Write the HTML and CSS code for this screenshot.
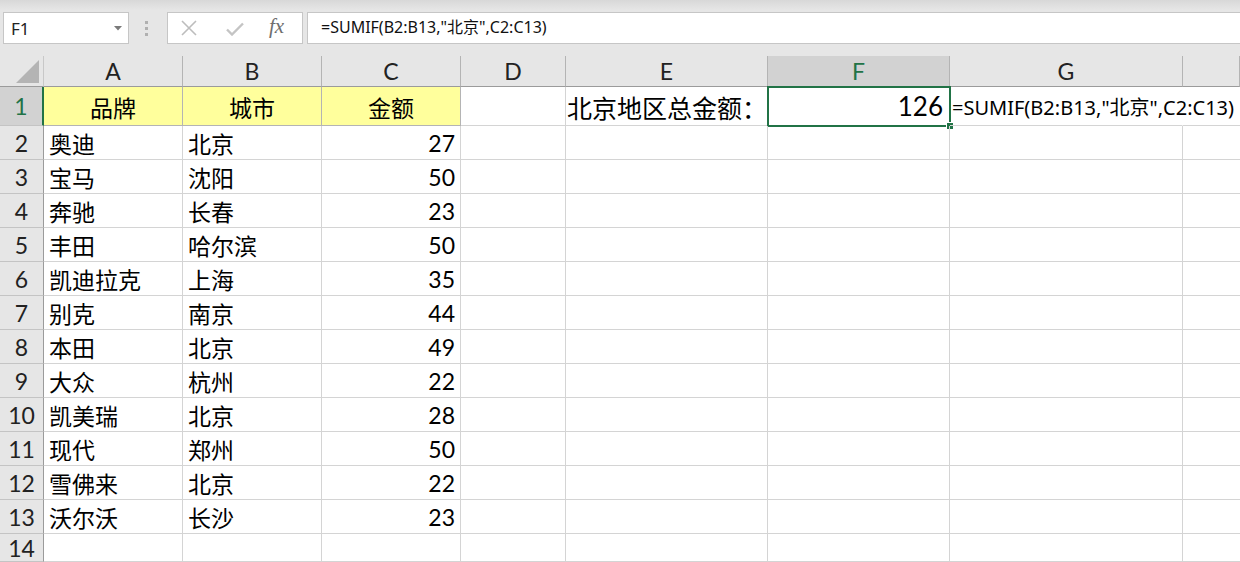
FILE: index.html
```html
<!DOCTYPE html>
<html lang="zh-CN">
<head>
  <meta charset="UTF-8" />
  <meta name="viewport" content="width=device-width, initial-scale=1.0" />
  <title>SUMIF</title>
  <link rel="stylesheet" href="styles.css">
</head>
<body>
  <div class="toolbar">
    <div class="namebox">
      <span>F1</span>
      <svg width="8" height="5" viewBox="0 0 8 5"><path d="M0 0h8L4 4.5z" fill="#7a7a7a"/></svg>
    </div>
    <svg class="grip" width="4" height="15" viewBox="0 0 4 15">
      <rect x="0" y="0" width="3" height="3" fill="#b0b0b0"/>
      <rect x="0" y="6" width="3" height="3" fill="#b0b0b0"/>
      <rect x="0" y="12" width="3" height="3" fill="#b0b0b0"/>
    </svg>
    <div class="fxbox">
      <svg class="ico-x" width="16" height="16" viewBox="0 0 16 16"><path d="M1 1L15 15M15 1L1 15" stroke="#bdbdbd" stroke-width="1.6" fill="none"/></svg>
      <svg class="ico-ok" width="18" height="14" viewBox="0 0 18 14"><path d="M1 7.5L6 12.5L17 1.5" stroke="#c4c4c4" stroke-width="2.4" fill="none"/></svg>
      <span class="fx">fx</span>
    </div>
    <div class="formula">=SUMIF(B2:B13,"北京",C2:C13)</div>
  </div>

  <div class="sheet" id="sheet"></div>

  <script>
    const sheet = document.getElementById('sheet');
    const kolom = ['A', 'B', 'C', 'D', 'E', 'F', 'G', ''];
    const data = [
      ['奥迪', '北京', 27], ['宝马', '沈阳', 50], ['奔驰', '长春', 23],
      ['丰田', '哈尔滨', 50], ['凯迪拉克', '上海', 35], ['别克', '南京', 44],
      ['本田', '北京', 49], ['大众', '杭州', 22], ['凯美瑞', '北京', 28],
      ['现代', '郑州', 50], ['雪佛来', '北京', 22], ['沃尔沃', '长沙', 23]
    ];

    function cell(cls, text) {
      const div = document.createElement('div');
      div.className = 'c ' + cls;
      if (text !== undefined) div.textContent = text;
      sheet.appendChild(div);
      return div;
    }

    // header kolom
    const corner = cell('corner');
    corner.innerHTML = '<svg width="24" height="24" viewBox="0 0 24 24"><path d="M0 23H23V0z" fill="#b4b4b4"/></svg>';
    kolom.forEach(k => cell(k === 'F' ? 'hd on' : 'hd', k));

    // baris 1
    cell('rh on', 1);
    cell('y zh', '品牌');
    cell('y zh', '城市');
    cell('y zh', '金额');
    cell('');
    cell('zh right label', '北京地区总金额：');
    const f1 = cell('num big', 126);
    f1.innerHTML += '<div class="sel"><div class="handle"></div></div>';
    cell('over', '=SUMIF(B2:B13,"北京",C2:C13)');
    cell('last');

    data.forEach((row, i) => {
      cell('rh', i + 2);
      cell('zh', row[0]);
      cell('zh', row[1]);
      cell('num', row[2]);
      for (let j = 0; j < 4; j++) cell('');
      cell('last');
    });

    cell('rh', 14);
    for (let j = 0; j < 7; j++) cell('');
    cell('last');
  </script>
</body>
</html>
```

FILE: styles.css
```css
body {
  margin: 0;
  padding: 0;
  background-color: white;
  color: black;
  font-family: Lato, "Noto Sans CJK SC", sans-serif;
  overflow: hidden;
}

.toolbar {
  height: 56px;
  box-sizing: border-box;
  padding-top: 12px;
  background: linear-gradient(#d8d8d8, #e6e6e6 10px);
  display: flex;
  align-items: flex-start;
}

.namebox {
  margin-left: 3px;
  width: 126px;
  height: 32px;
  box-sizing: border-box;
  background-color: white;
  border: 1px solid #c6c6c6;
  display: flex;
  align-items: center;
  justify-content: space-between;
  padding: 0 6px 0 7px;
  font: 17px "Noto Sans", sans-serif;
  color: #222;
}

.grip {
  margin: 9px 0 0 16px;
}

.fxbox {
  margin-left: 18px;
  width: 136px;
  height: 32px;
  box-sizing: border-box;
  background-color: white;
  border: 1px solid #c6c6c6;
  display: flex;
  align-items: center;
}

.ico-x {
  margin-left: 13px;
}

.ico-ok {
  margin-left: 29px;
  margin-top: 2px;
}

.fx {
  margin-left: 25px;
  font: italic 21px "Liberation Serif", serif;
  color: #6e6e6e;
  margin-top: -3px;
}

.formula {
  margin-left: 4px;
  flex: 1;
  height: 32px;
  box-sizing: border-box;
  background-color: white;
  border: 1px solid #c6c6c6;
  border-right: none;
  padding-left: 13px;
  font: 16px "Noto Sans", "Noto Sans CJK SC", sans-serif;
  line-height: 29px;
  color: #111;
  white-space: nowrap;
}

.sheet {
  display: grid;
  grid-template-columns: 44px 139px 139px 139px 105px 202px 182px 233px 1fr;
  grid-template-rows: 31px 39px repeat(12, 34px) 28px;
}

.c {
  box-sizing: border-box;
  border-right: 1px solid #d4d4d4;
  border-bottom: 1px solid #d4d4d4;
  padding: 0 5px;
  display: flex;
  align-items: center;
  white-space: nowrap;
  font-size: 23px;
  position: relative;
}

.corner {
  background-color: #e6e6e6;
  border-right: 1px solid #c8c8c8;
  border-bottom: 1px solid #9b9b9b;
  align-items: flex-end;
  justify-content: flex-end;
  padding: 0 3px 2px 0;
}

.corner svg {
  display: block;
}

.hd {
  background-color: #e6e6e6;
  border-right-color: #b4b4b4;
  border-bottom-color: #9b9b9b;
  justify-content: center;
  color: #222;
}

.hd.on {
  background-color: #d2d2d2;
  color: #217346;
}

.rh {
  background-color: #e6e6e6;
  border-right-color: #9b9b9b;
  border-bottom-color: #c4c4c4;
  justify-content: center;
  color: #222;
}

.rh.on {
  background-color: #d2d2d2;
  color: #217346;
  border-right: 2px solid #217346;
}

.y {
  background-color: #ffff9c;
  border-color: #b4b4b4;
  justify-content: center;
}

.zh {
  font-family: "Noto Sans CJK SC", sans-serif;
  font-size: 23px;
  padding-top: 1px;
  color: #000;
}

.right,
.num {
  justify-content: flex-end;
}

.label {
  font-size: 25px;
  padding-right: 0;
}

.big {
  font-size: 26px;
  padding-right: 6px;
}

.over {
  border-right-color: transparent;
  font: 20px "Noto Sans", "Noto Sans CJK SC", sans-serif;
  padding-left: 2px;
  overflow: visible;
  z-index: 1;
}

.last {
  border-right: none;
}

.sel {
  position: absolute;
  left: -1px;
  top: -1px;
  right: -2px;
  bottom: -2px;
  border: 2px solid #217346;
}

.handle {
  position: absolute;
  right: -5px;
  bottom: -5px;
  width: 6px;
  height: 6px;
  background-color: #217346;
  border: 1px solid white;
}
```
